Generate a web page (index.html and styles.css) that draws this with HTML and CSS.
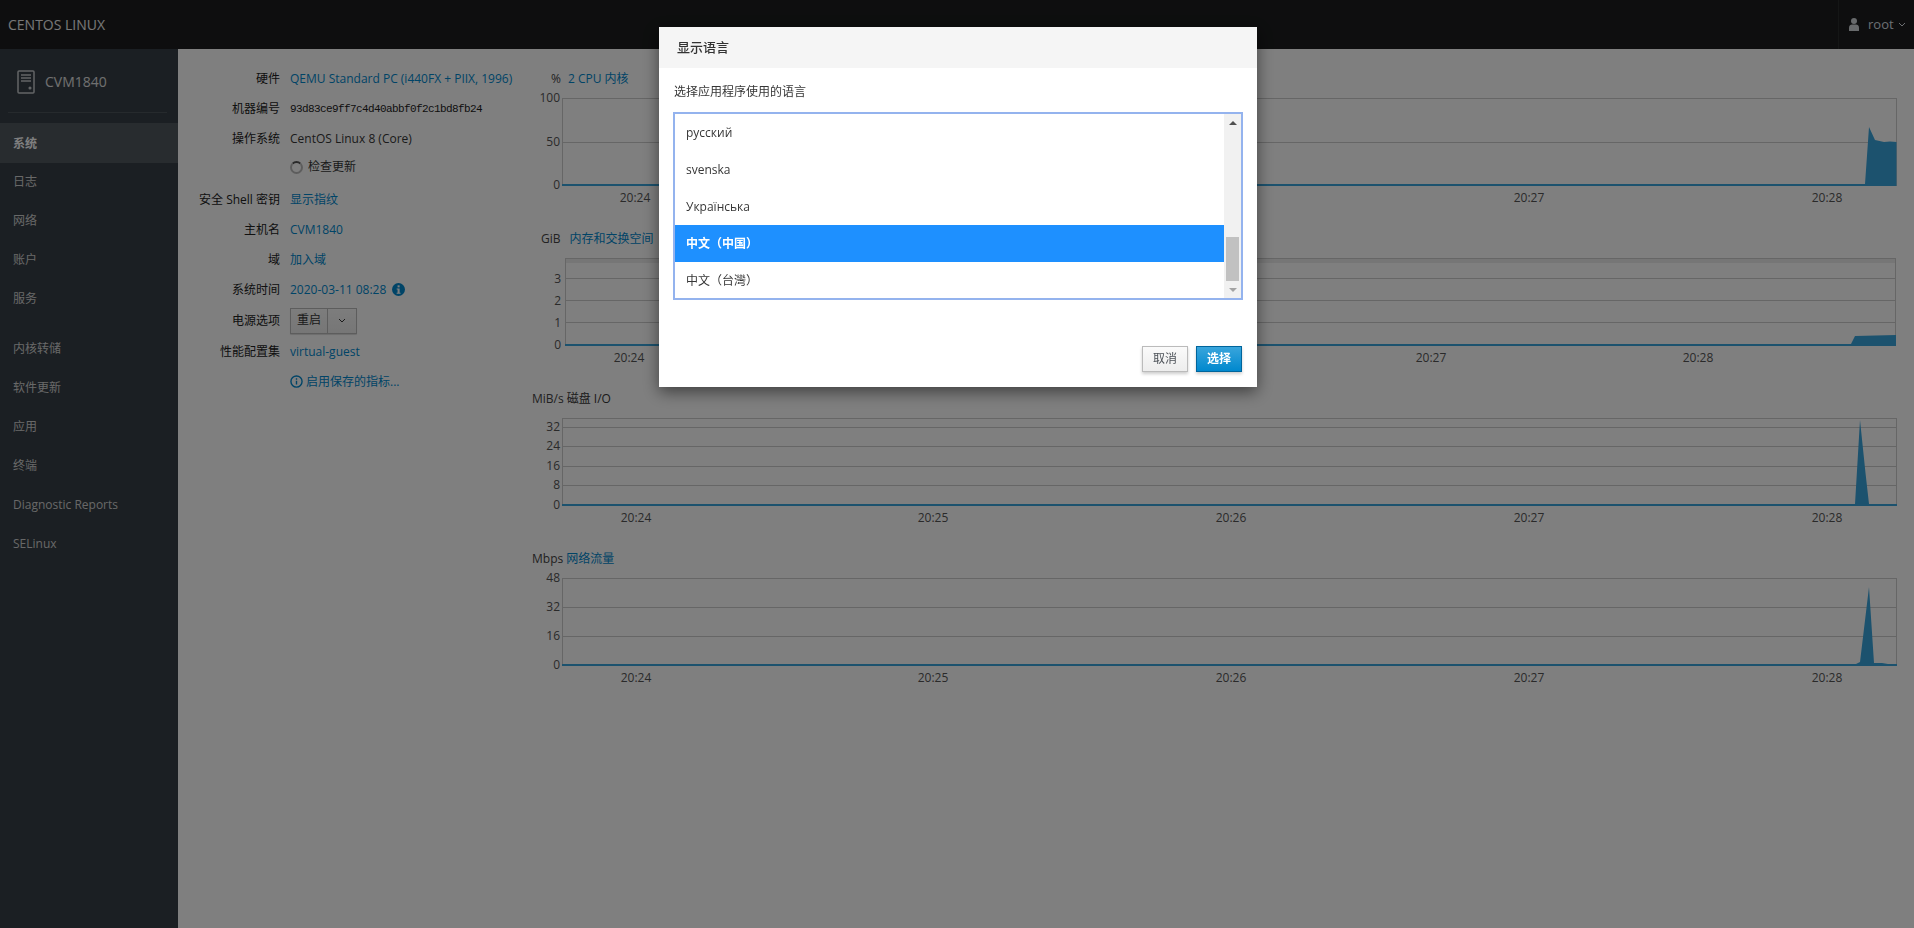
FILE: index.html
```html
<!DOCTYPE html>
<html lang="zh-CN">
<head>
<meta charset="utf-8">
<title>CVM1840</title>
<link rel="stylesheet" href="styles.css">
</head>
<body>
<header class="topbar">
  <div class="brand">CENTOS LINUX</div>
  <div class="user">
    <svg class="user-icon" viewBox="0 0 12 13"><circle cx="6" cy="3" r="3"/><path d="M1 13V9.500C1 7.500 2.500 6.500 4 6.500H8C9.500 6.500 11 7.500 11 9.500V13Z"/></svg>
    <span>root</span>
    <svg class="chev chev-user" viewBox="0 0 8 5"><path d="M1 1l3 3 3-3"/></svg>
  </div>
</header>
<div class="shell">
  <nav class="sidebar">
    <div class="host">
      <svg class="host-icon" viewBox="0 0 18 24"><rect x="1" y="1" width="16" height="22" rx="1"/><path d="M4 5h10M4 8h10M4 11h10"/><circle cx="13" cy="18" r="0.800"/></svg>
      <span>CVM1840</span>
    </div>
    <ul class="nav">
      <li class="nav-item active">系统</li>
      <li class="nav-item">日志</li>
      <li class="nav-item">网络</li>
      <li class="nav-item">账户</li>
      <li class="nav-item">服务</li>
    </ul>
    <ul class="nav nav-second">
      <li class="nav-item">内核转储</li>
      <li class="nav-item">软件更新</li>
      <li class="nav-item">应用</li>
      <li class="nav-item">终端</li>
      <li class="nav-item">Diagnostic Reports</li>
      <li class="nav-item">SELinux</li>
    </ul>
  </nav>
  <main class="main">
    <section class="info">
      <div class="k">硬件</div><div class="v"><a class="link">QEMU Standard PC (i440FX + PIIX, 1996)</a></div>
      <div class="k">机器编号</div><div class="v mono">93d83ce9ff7c4d40abbf0f2c1bd8fb24</div>
      <div class="k">操作系统</div><div class="v">CentOS Linux 8 (Core)</div>
      <div class="k k-update"></div><div class="v v-update"><span class="spinner"></span>检查更新</div>
      <div class="k">安全 Shell 密钥</div><div class="v"><a class="link">显示指纹</a></div>
      <div class="k">主机名</div><div class="v"><a class="link">CVM1840</a></div>
      <div class="k">域</div><div class="v"><a class="link">加入域</a></div>
      <div class="k">系统时间</div><div class="v"><a class="link">2020-03-11 08:28</a>
        <svg class="info-solid" viewBox="0 0 14 14"><circle cx="7" cy="7" r="7"/><rect class="cut" x="6" y="2.500" width="2.200" height="2.200"/><path class="cut" d="M5 6h3.200v4.500h1v1H5v-1h1V7H5Z"/></svg>
      </div>
      <div class="k k-power">电源选项</div><div class="v v-power">
        <div class="btn-group"><button class="btn btn-main">重启</button><button class="btn btn-caret"><svg class="chev" viewBox="0 0 8 5"><path d="M1 1l3 3 3-3"/></svg></button></div>
      </div>
      <div class="k">性能配置集</div><div class="v"><a class="link">virtual-guest</a></div>
      <div class="k"></div><div class="v"><a class="link link-icon"><svg class="info-line" viewBox="0 0 14 14"><circle cx="7" cy="7" r="6"/><path d="M7 6.200v4M7 3.500v1.500"/></svg>启用保存的指标...</a></div>
    </section>
    <section class="charts">
      <article class="chart">
        <h3 class="chart-title"><span class="unit unit-pct">%</span><a class="link">2 CPU 内核</a></h3>
        <svg class="plot" viewBox="0 0 1384 140">
          <path class="grid" d="M32 54.500H1367"/>
          <rect class="frame" x="32.500" y="10.500" width="1334" height="87"/>
          <path class="area" d="M335 96H1335L1339 39 1345 52 1354 54 1360 53.500 1366.500 54V98H32V96Z"/>
          <text class="ty" x="30" y="14">100</text><text class="ty" x="30" y="58">50</text><text class="ty" x="30" y="101">0</text>
          <text class="tx" x="105" y="114">20:24</text><text class="tx" x="999" y="114">20:27</text><text class="tx" x="1297" y="114">20:28</text>
        </svg>
      </article>
      <article class="chart">
        <h3 class="chart-title"><span class="unit unit-gib">GiB</span><a class="link">内存和交换空间</a></h3>
        <svg class="plot" viewBox="0 0 1384 140">
          <rect class="band" x="35" y="10" width="1331" height="5"/>
          <path class="grid" d="M35 30.500H1366M35 52.500H1366M35 74.500H1366"/>
          <rect class="frame" x="35.500" y="10.500" width="1330" height="87"/>
          <path class="area" d="M35 96H1321L1325 88 1366 87V98H35Z"/>
          <text class="ty" x="31" y="35">3</text><text class="ty" x="31" y="57">2</text><text class="ty" x="31" y="79">1</text><text class="ty" x="31" y="101">0</text>
          <text class="tx" x="99" y="114">20:24</text><text class="tx" x="901" y="114">20:27</text><text class="tx" x="1168" y="114">20:28</text>
        </svg>
      </article>
      <article class="chart">
        <h3 class="chart-title"><span class="unit unit-mib">MiB/s</span><span class="plain">磁盘 I/O</span></h3>
        <svg class="plot" viewBox="0 0 1384 140">
          <path class="grid" d="M32 19.500H1367M32 38.500H1367M32 58.500H1367M32 77.500H1367"/>
          <rect class="frame" x="32.500" y="10.500" width="1334" height="87"/>
          <path class="area" d="M32 96H1325L1330 12 1335.500 65 1339 96H1367V98H32Z"/>
          <text class="ty" x="30" y="23">32</text><text class="ty" x="30" y="42">24</text><text class="ty" x="30" y="62">16</text><text class="ty" x="30" y="81">8</text><text class="ty" x="30" y="101">0</text>
          <text class="tx" x="106" y="114">20:24</text><text class="tx" x="403" y="114">20:25</text><text class="tx" x="701" y="114">20:26</text><text class="tx" x="999" y="114">20:27</text><text class="tx" x="1297" y="114">20:28</text>
        </svg>
      </article>
      <article class="chart">
        <h3 class="chart-title"><span class="unit unit-mib">Mbps</span><a class="link">网络流量</a></h3>
        <svg class="plot" viewBox="0 0 1384 140">
          <path class="grid" d="M32 39.500H1367M32 68.500H1367"/>
          <rect class="frame" x="32.500" y="10.500" width="1334" height="87"/>
          <path class="area" d="M32 96H1326L1330 94 1339 19 1344 95 1352 95 1358 96H1367V98H32Z"/>
          <text class="ty" x="30" y="14">48</text><text class="ty" x="30" y="43">32</text><text class="ty" x="30" y="72">16</text><text class="ty" x="30" y="101">0</text>
          <text class="tx" x="106" y="114">20:24</text><text class="tx" x="403" y="114">20:25</text><text class="tx" x="701" y="114">20:26</text><text class="tx" x="999" y="114">20:27</text><text class="tx" x="1297" y="114">20:28</text>
        </svg>
      </article>
    </section>
  </main>
</div>
<div class="backdrop">
  <div class="modal">
    <div class="modal-head">显示语言</div>
    <div class="modal-body">
      <label class="modal-label">选择应用程序使用的语言</label>
      <div class="listbox">
        <ul class="options">
          <li class="option">русский</li>
          <li class="option">svenska</li>
          <li class="option">Українська</li>
          <li class="option selected">中文（中国）</li>
          <li class="option">中文（台灣）</li>
        </ul>
        <div class="scrollbar">
          <div class="sb-btn"><span class="tri-up"></span></div>
          <div class="sb-space"></div>
          <div class="sb-thumb"></div>
          <div class="sb-btn"><span class="tri-down"></span></div>
        </div>
      </div>
    </div>
    <div class="modal-foot">
      <button class="mbtn mbtn-default">取消</button>
      <button class="mbtn mbtn-primary">选择</button>
    </div>
  </div>
</div>
</body>
</html>
```
FILE: styles.css
```css
* { box-sizing: border-box; }
html, body { height: 100%; }
body {
  margin: 0;
  overflow: hidden;
  background: #fff;
  color: #363636;
  font: 12px/1.4 "Open Sans", "Noto Sans CJK SC", sans-serif;
  display: flex;
  flex-direction: column;
}
ul { list-style: none; margin: 0; padding: 0; }

.topbar {
  height: 49px;
  flex: none;
  background: #1c1d1e;
  display: flex;
  align-items: center;
  justify-content: space-between;
  color: #f0f0f0;
}
.brand { padding-left: 8px; font-size: 14px; }
.user {
  height: 100%;
  width: 76px;
  border-left: 1px solid #2b2c2d;
  display: flex;
  align-items: center;
  padding-left: 9px;
  color: #d8dfe4;
  font-size: 13px;
}
.user-icon { width: 12px; height: 13px; fill: #d0d4d8; margin-right: 8px; }
.chev { width: 8px; height: 5px; fill: none; stroke: #363636; stroke-width: 1; }
.chev-user { stroke: #d8dfe4; margin-left: 4px; }

.shell { flex: 1; display: flex; min-height: 0; }
.sidebar { width: 178px; flex: none; background: #363e46; color: #d1d1d1; }
.host {
  height: 64px;
  margin: 0 11px 10px 8px;
  padding: 2px 0 0 9px;
  display: flex;
  align-items: center;
  gap: 10px;
  border-bottom: 1px solid #4c545b;
  font-size: 14px;
  color: #e0e0e0;
}
.host-icon { width: 18px; height: 24px; fill: none; stroke: #c6cacd; stroke-width: 1.500; }
.host-icon circle { fill: #c6cacd; }
.nav-item { height: 39px; display: flex; align-items: center; padding: 2px 0 0 13px; font-size: 12px; }
.nav-item.active { background: #50585f; height: 40px; margin-bottom: -1px; color: #fff; font-weight: 700; }
.nav-second { margin-top: 11px; }

.main { flex: 1; display: flex; min-width: 0; }
.info {
  width: 352px;
  flex: none;
  padding: 15px 0 0 20px;
  display: grid;
  grid-template-columns: 82px 1fr;
  column-gap: 10px;
  grid-auto-rows: 30px;
  grid-template-rows: 30px 30px 30px 31px 30px 30px 30px 30px 32px 30px 30px;
  align-content: start;
  align-items: center;
}
.k { text-align: right; white-space: nowrap; justify-self: end; color: #222; }
.v { white-space: nowrap; display: flex; align-items: center; }
.link { color: #0088ce; }
.mono { font: 11px "Liberation Mono", monospace; letter-spacing: -0.6px; color: #222; }
.v-update { align-self: start; height: 27px; }
.spinner {
  width: 13px; height: 13px;
  margin-right: 5px;
  border: 2px solid #bbb;
  border-top-color: #555;
  border-radius: 50%;
}
.info-solid { width: 13px; height: 13px; margin-left: 6px; fill: #0088ce; }
.info-solid .cut { fill: #fff; }
.info-line { width: 13px; height: 13px; margin-right: 3px; fill: none; stroke: #0088ce; stroke-width: 1.500; }
.link-icon { display: flex; align-items: center; }
.btn-group { display: flex; height: 26px; margin-top: -1px; border-radius: 1px; box-shadow: 0 1px 1px rgba(0,0,0,.15); }
.btn {
  font: inherit;
  color: #363636;
  padding: 0;
  border: 1px solid #bbb;
  background: linear-gradient(#fafafa, #ededed);
  display: flex;
  align-items: center;
  justify-content: center;
}
.btn-main { width: 38px; }
.btn-caret { width: 29px; border-left: 0; }

.charts { flex: 1; padding-top: 19px; min-width: 0; }
.chart { height: 160px; }
.chart-title { margin: 0; height: 20px; padding-top: 2px; display: flex; align-items: center; font-size: 12px; font-weight: 400; white-space: nowrap; }
.unit { color: #444; }
.unit-pct { margin-left: 21px; margin-right: 7px; }
.unit-gib { margin-left: 11px; margin-right: 9px; }
.unit-mib { margin-left: 2px; margin-right: 3px; }
.plain { color: #363636; }
.plot { display: block; width: 1384px; height: 140px; }
.grid { stroke: #ccc; stroke-width: 1; fill: none; }
.frame { stroke: #ccc; stroke-width: 1; fill: none; }
.band { fill: #ededed; }
.area { fill: #39a5dc; }
.ty, .tx { font-size: 12px; fill: #555; }
.ty { text-anchor: end; }
.tx { text-anchor: middle; }

.backdrop {
  position: fixed;
  inset: 0;
  background: rgba(0,0,0,.5);
  padding: 27px 0 0 2px;
  display: flex;
  justify-content: center;
  align-items: flex-start;
}
.modal {
  width: 598px;
  height: 360px;
  background: #fff;
  display: flex;
  flex-direction: column;
  box-shadow: 0 5px 15px rgba(0,0,0,.5);
}
.modal-head {
  height: 41px;
  flex: none;
  background: #f5f5f5;
  padding-left: 18px;
  display: flex;
  align-items: center;
  font-size: 13px;
  font-weight: 500;
  color: #333;
}
.modal-body { flex: 1; padding: 16px 14px 0 14px; }
.modal-label { display: block; height: 28px; padding-left: 1px; color: #363636; font-size: 12px; }
.listbox {
  height: 188px;
  border: 2px solid #94b3ee;
  display: flex;
  overflow: hidden;
  outline: 0;
}
.options { flex: 1; }
.option { height: 37px; padding: 2px 0 0 11px; display: flex; align-items: center; color: #363636; font-size: 12px; }
.option.selected { background: #1e90ff; color: #fff; font-weight: 700; }
.scrollbar { width: 17px; flex: none; background: #f1f1f1; display: flex; flex-direction: column; }
.sb-btn { height: 17px; flex: none; display: flex; align-items: center; justify-content: center; }
.sb-space { flex: 1; }
.sb-thumb { height: 44px; flex: none; margin: 0 2px; background: #c1c1c1; }
.tri-up { border: 4px solid transparent; border-top: 0; border-bottom: 4px solid #505050; }
.tri-down { border: 4px solid transparent; border-bottom: 0; border-top: 4px solid #a3a3a3; }
.modal-foot { height: 41px; flex: none; padding: 0 15px 15px 0; display: flex; justify-content: flex-end; gap: 8px; }
.mbtn { width: 46px; height: 26px; font: inherit; padding: 0; box-shadow: 0 2px 3px rgba(0,0,0,.2); }
.mbtn-default { border: 1px solid #bbb; background: linear-gradient(#fafafa, #ededed); color: #4d5258; }
.mbtn-primary { border: 1px solid #00659c; background: linear-gradient(#39a5dc, #0088ce); color: #fff; font-weight: 700; }
```
